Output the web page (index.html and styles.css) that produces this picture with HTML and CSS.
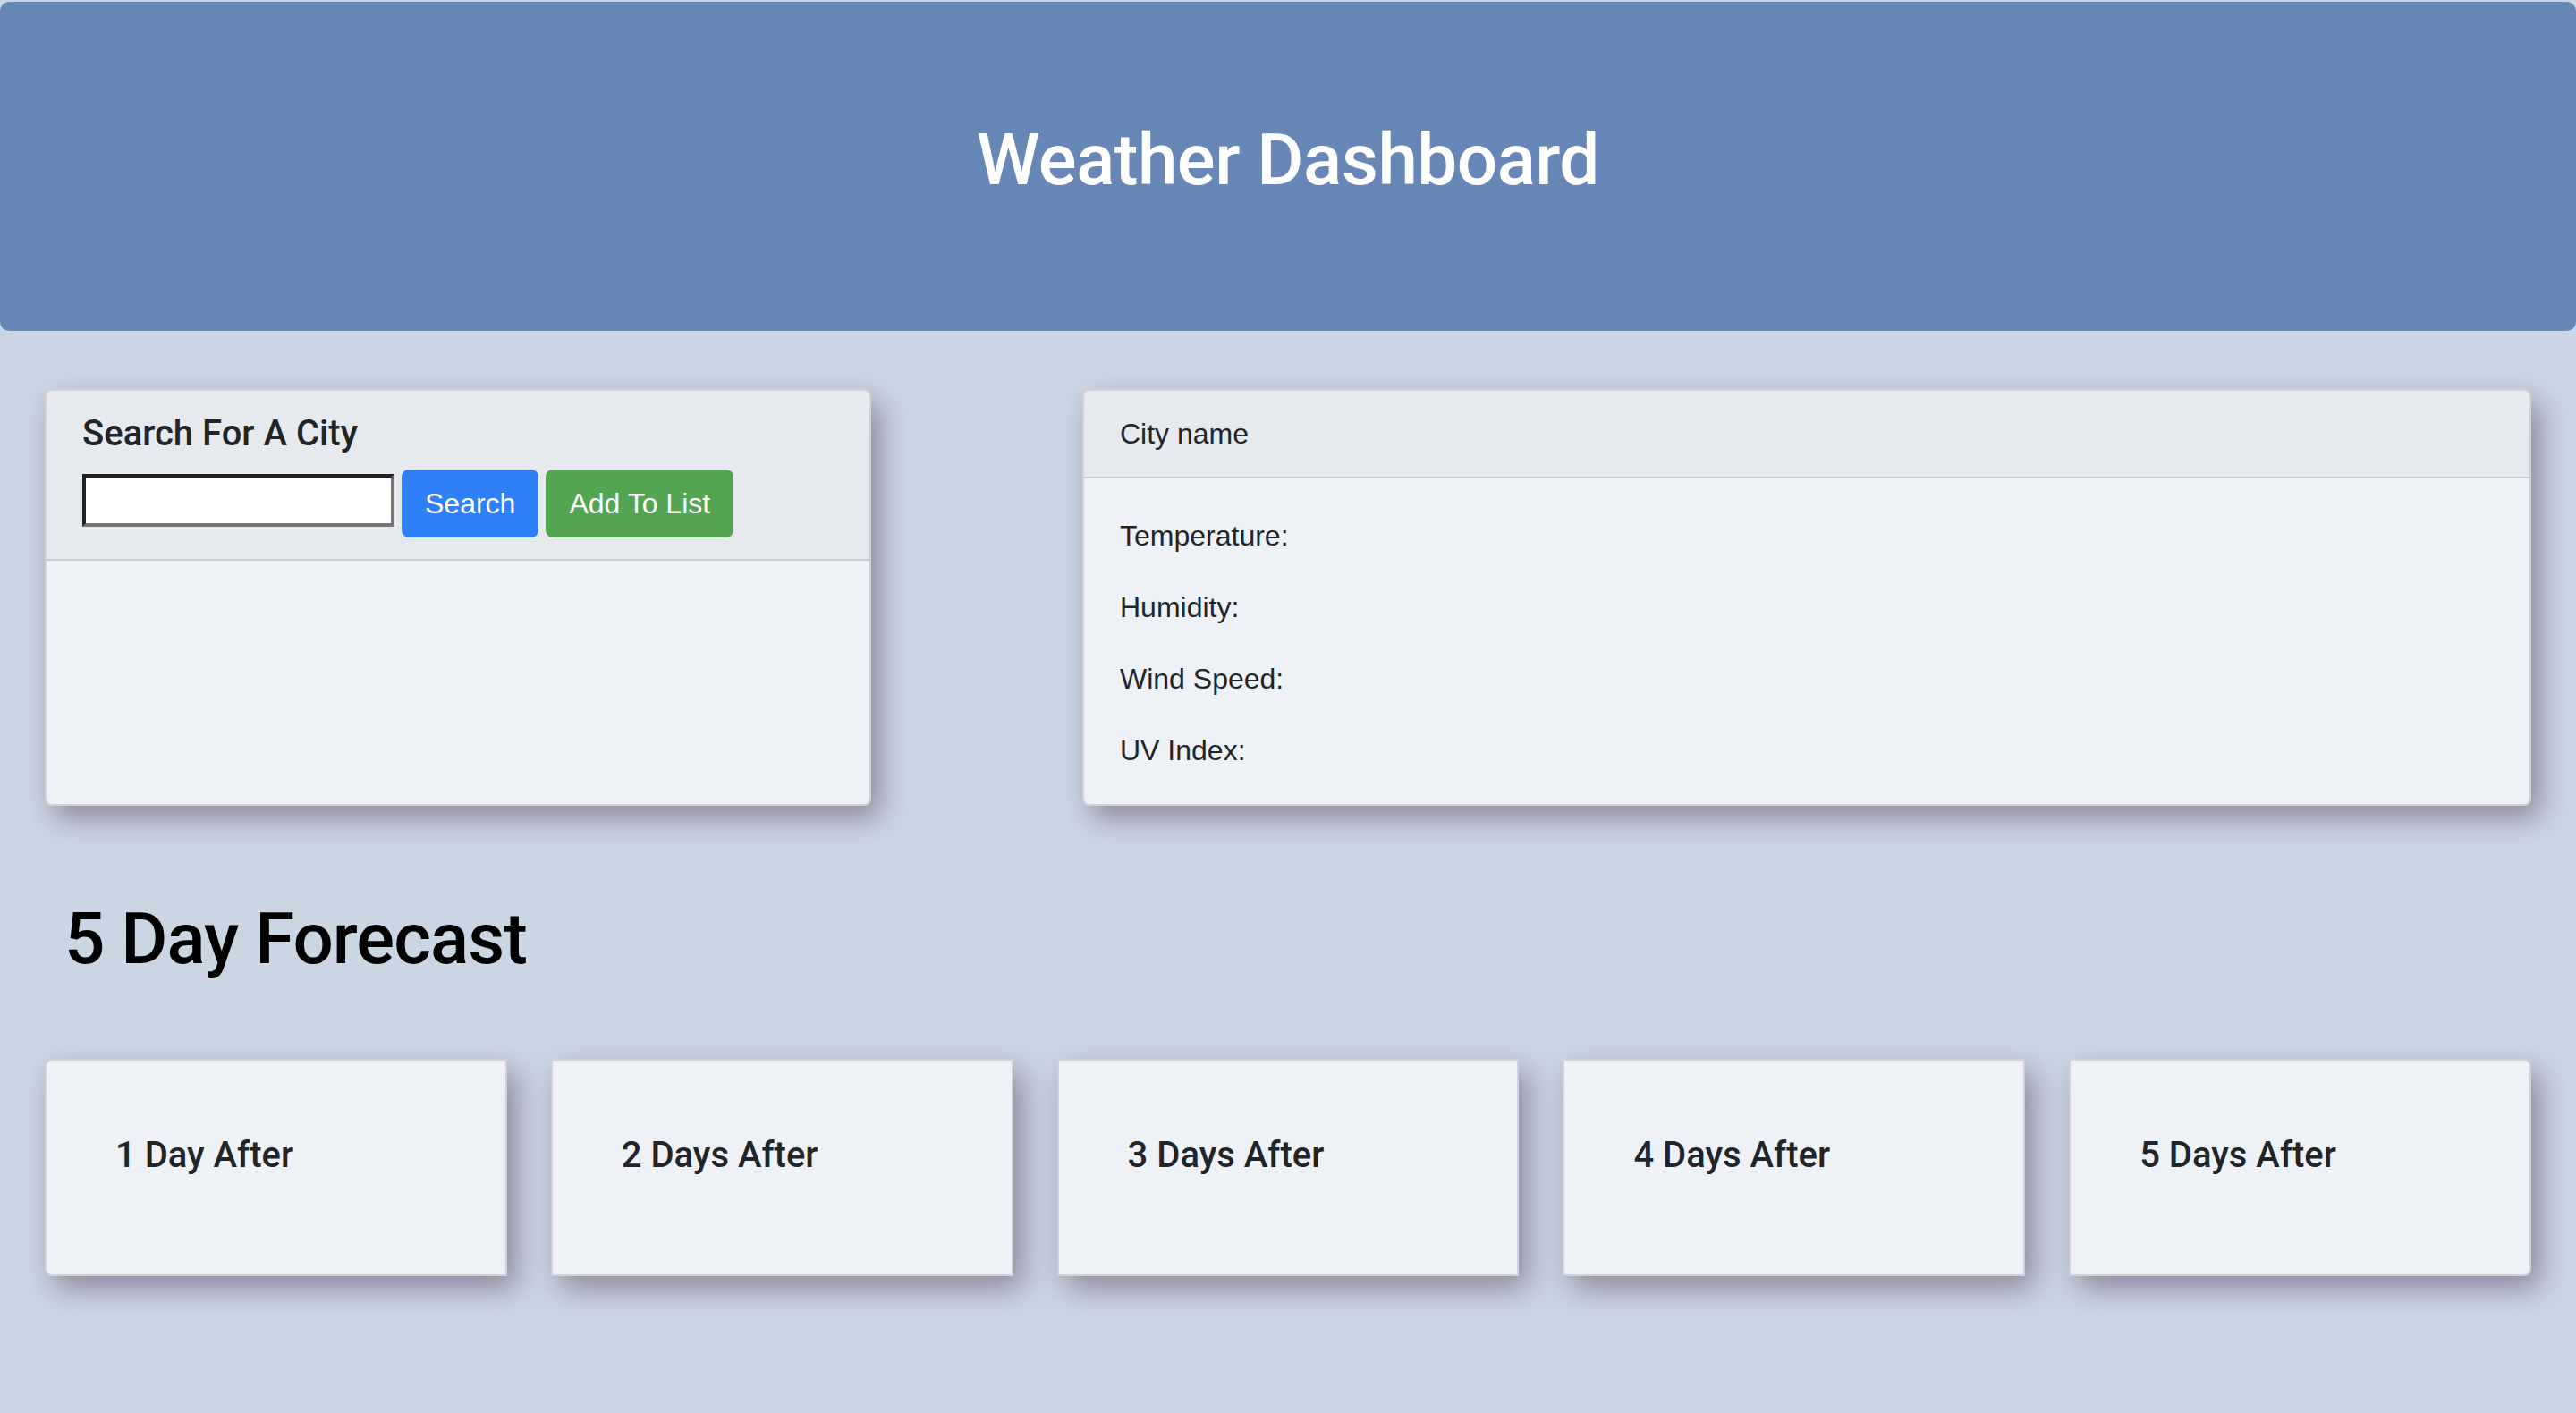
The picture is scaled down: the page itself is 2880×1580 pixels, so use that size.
FILE: index.html
```html
<!DOCTYPE html>
<html lang="en">
<head>
<meta charset="utf-8">
<title>Weather Dashboard</title>
<link rel="stylesheet" href="styles.css">
</head>
<body>
  <header class="jumbotron">
    <h1 class="title">Weather Dashboard</h1>
  </header>

  <section class="top-row">
    <div class="card search-card">
      <div class="card-header search-header">
        <h5 class="card-title">Search For A City</h5>
        <div class="search-form">
          <input class="city-input" type="text">
          <button class="btn btn-primary">Search</button>
          <button class="btn btn-success">Add To List</button>
        </div>
      </div>
      <div class="card-body"></div>
    </div>

    <div class="card weather-card">
      <div class="card-header">City name</div>
      <div class="card-body weather-body">
        <p class="stat">Temperature:</p>
        <p class="stat">Humidity:</p>
        <p class="stat">Wind Speed:</p>
        <p class="stat">UV Index:</p>
      </div>
    </div>
  </section>

  <h1 class="forecast-title">5 Day Forecast</h1>

  <section class="forecast-row">
    <div class="card day-card"><h5 class="day-title">1 Day After</h5></div>
    <div class="card day-card"><h5 class="day-title">2 Days After</h5></div>
    <div class="card day-card"><h5 class="day-title">3 Days After</h5></div>
    <div class="card day-card"><h5 class="day-title">4 Days After</h5></div>
    <div class="card day-card"><h5 class="day-title">5 Days After</h5></div>
  </section>
</body>
</html>
```

FILE: styles.css
```css
* { box-sizing: border-box; }

html { background: #cbd6e5; }

body {
  margin: 0;
  padding-bottom: 120px;
  background: #cbd6e5;
  font-family: "Liberation Sans", Arial, sans-serif;
  font-size: 32px;
  line-height: 1.5;
  color: #212529;
}

.jumbotron {
  margin: 2px 0 65px;
  padding: 129px 64px 127px;
  background: #6788b7;
  border-radius: 10px;
  text-align: center;
  color: #fff;
}

.title,
.card-title,
.forecast-title,
.day-title {
  font-family: Roboto, "Liberation Sans", Arial, sans-serif;
  font-weight: 500;
  line-height: 1.2;
}

.title {
  margin: 0 0 16px;
  font-size: 80px;
  letter-spacing: -0.5px;
}

.top-row {
  display: flex;
  justify-content: space-between;
  align-items: stretch;
  padding: 0 50px;
}

.card {
  display: flex;
  flex-direction: column;
  background: #eef1f6;
  border: 2px solid rgba(0, 0, 0, 0.125);
  border-radius: 8px;
  box-shadow: 10px 14px 32px rgba(95, 70, 100, 0.55);
}

.search-card { width: 924px; }
.weather-card { width: 1620px; }

.card-header {
  padding: 24px 40px;
  background: rgba(0, 0, 0, 0.03);
  border-bottom: 2px solid rgba(0, 0, 0, 0.125);
  border-radius: 6px 6px 0 0;
}

.card-title {
  margin: 0 0 16px;
  font-size: 40px;
}

.search-form {
  display: flex;
  align-items: flex-start;
  gap: 8px;
}

.city-input {
  width: 349px;
  height: 59px;
  margin-top: 5px;
  border: 4px inset #767676;
  background: #fff;
  padding: 2px 4px;
  font-size: 26px;
}

.btn {
  padding: 12px 24px;
  font-family: inherit;
  font-size: 32px;
  line-height: 1.5;
  border: 2px solid transparent;
  border-radius: 8px;
  color: #fff;
}

.btn-primary { background: #2f80f6; border-color: #2f80f6; }
.btn-success { background: #54a552; border-color: #54a552; }

.card-body {
  flex: 1;
  padding: 40px;
}

.weather-body { padding-bottom: 36px; }

.stat { margin: 0 0 32px; }
.stat:last-child { margin-bottom: 0; }

.forecast-title {
  margin: 101px 0 86px;
  padding-left: 72px;
  font-size: 80px;
  color: #000;
  letter-spacing: -1px;
}

.forecast-row {
  display: flex;
  gap: 49px;
  padding: 0 50px;
}

.day-card {
  flex: 1;
  height: 243px;
  padding: 82px 77px 0;
  border-radius: 0;
}

.day-card:first-child { border-radius: 8px 0 0 8px; }
.day-card:last-child { border-radius: 0 8px 8px 0; }

.day-title {
  margin: 0;
  font-size: 40px;
}
```
